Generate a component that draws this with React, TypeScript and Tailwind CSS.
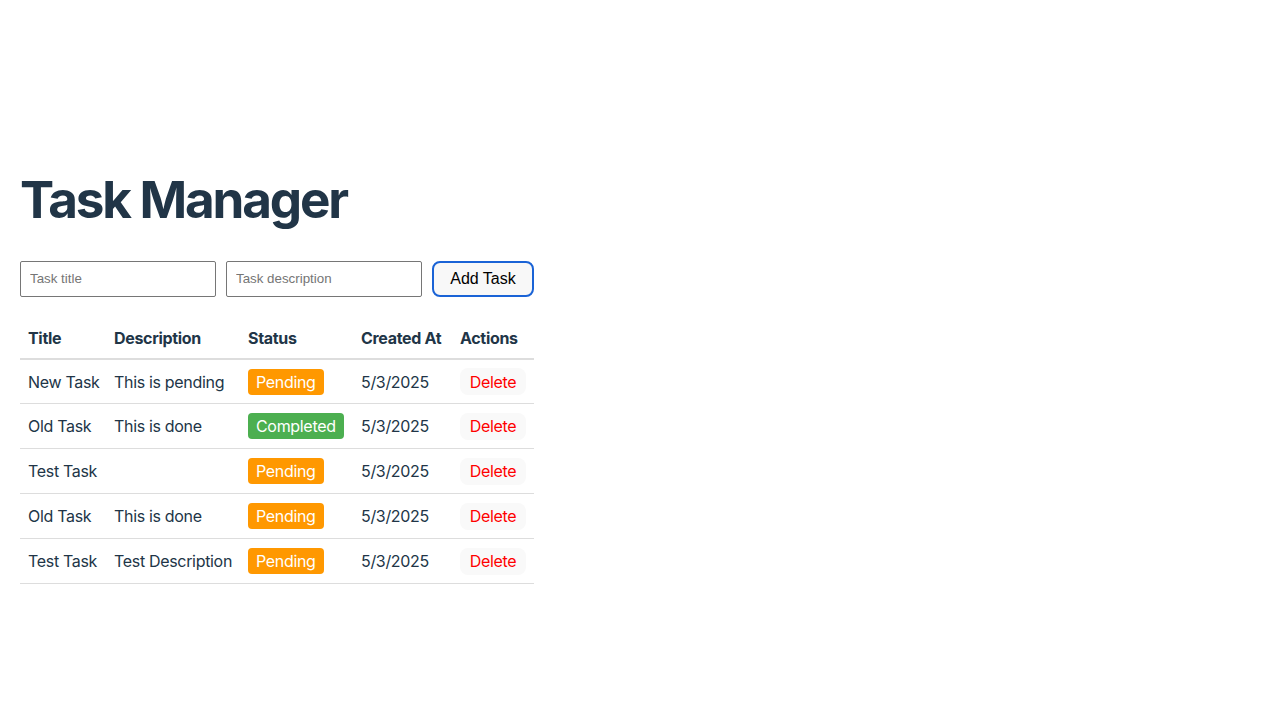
type Task = {
  title: string;
  description: string;
  status: "pending" | "completed";
  createdAt: string;
};

const TASKS: Task[] = [
  { title: "New Task", description: "This is pending", status: "pending", createdAt: "5/3/2025" },
  { title: "Old Task", description: "This is done", status: "completed", createdAt: "5/3/2025" },
  { title: "Test Task", description: "", status: "pending", createdAt: "5/3/2025" },
  { title: "Old Task", description: "This is done", status: "pending", createdAt: "5/3/2025" },
  { title: "Test Task", description: "Test Description", status: "pending", createdAt: "5/3/2025" },
];

function StatusBadge({ status }: { status: Task["status"] }) {
  const bg = status === "completed" ? "bg-[#4caf50]" : "bg-[#ff9800]";
  return (
    <span className={`inline-block h-[26px] rounded px-2 leading-[26px] text-white ${bg}`}>
      {status === "completed" ? "Completed" : "Pending"}
    </span>
  );
}

export default function App() {
  return (
    <div className="flex min-h-screen items-center bg-white px-5 font-['Inter','Noto_Sans',sans-serif] text-base tracking-[-0.02em] text-[#213547]">
      <div className="mt-[2px]">
        <h1 className="mt-[33px] mb-[34px] text-[51.2px] font-bold leading-[1.1] tracking-[-2.2px]">Task Manager</h1>

        <div className="flex h-9 gap-[10px] font-['Liberation_Sans',Arial,sans-serif] tracking-normal">
          <input
            placeholder="Task title"
            className="h-9 w-[196px] rounded-[2px] border border-[#767676] px-[9px] text-[13.33px] placeholder:text-[#757575]"
          />
          <input
            placeholder="Task description"
            className="h-9 w-[196px] rounded-[2px] border border-[#767676] px-[9px] text-[13.33px] placeholder:text-[#757575]"
          />
          <button className="h-9 w-[102px] rounded-lg border-2 border-[#1a63d6] bg-[#f8f8f8] text-base text-black">
            Add Task
          </button>
        </div>

        <table className="mt-[21px] w-[514px] table-fixed border-collapse text-left">
          <colgroup>
            <col className="w-[86px]" />
            <col className="w-[134px]" />
            <col className="w-[113px]" />
            <col className="w-[99px]" />
            <col className="w-[82px]" />
          </colgroup>
          <thead>
            <tr className="h-[41px] border-b-2 border-[#dddddd]">
              <th className="px-2 font-bold whitespace-nowrap">Title</th>
              <th className="px-2 font-bold whitespace-nowrap">Description</th>
              <th className="px-2 font-bold whitespace-nowrap">Status</th>
              <th className="px-2 font-bold whitespace-nowrap">Created At</th>
              <th className="px-2 font-bold whitespace-nowrap">Actions</th>
            </tr>
          </thead>
          <tbody>
            {TASKS.map((t, i) => (
              <tr key={i} className="h-[45px] border-b border-[#dddddd]">
                <td className="px-2 whitespace-nowrap">{t.title}</td>
                <td className="px-2 whitespace-nowrap">{t.description}</td>
                <td className="px-2">
                  <StatusBadge status={t.status} />
                </td>
                <td className="px-2 whitespace-nowrap">{t.createdAt}</td>
                <td className="px-2">
                  <button className="h-[27px] w-[66px] rounded-lg bg-[#f9f9f9] text-[#ff0000]">Delete</button>
                </td>
              </tr>
            ))}
          </tbody>
        </table>
      </div>
    </div>
  );
}
